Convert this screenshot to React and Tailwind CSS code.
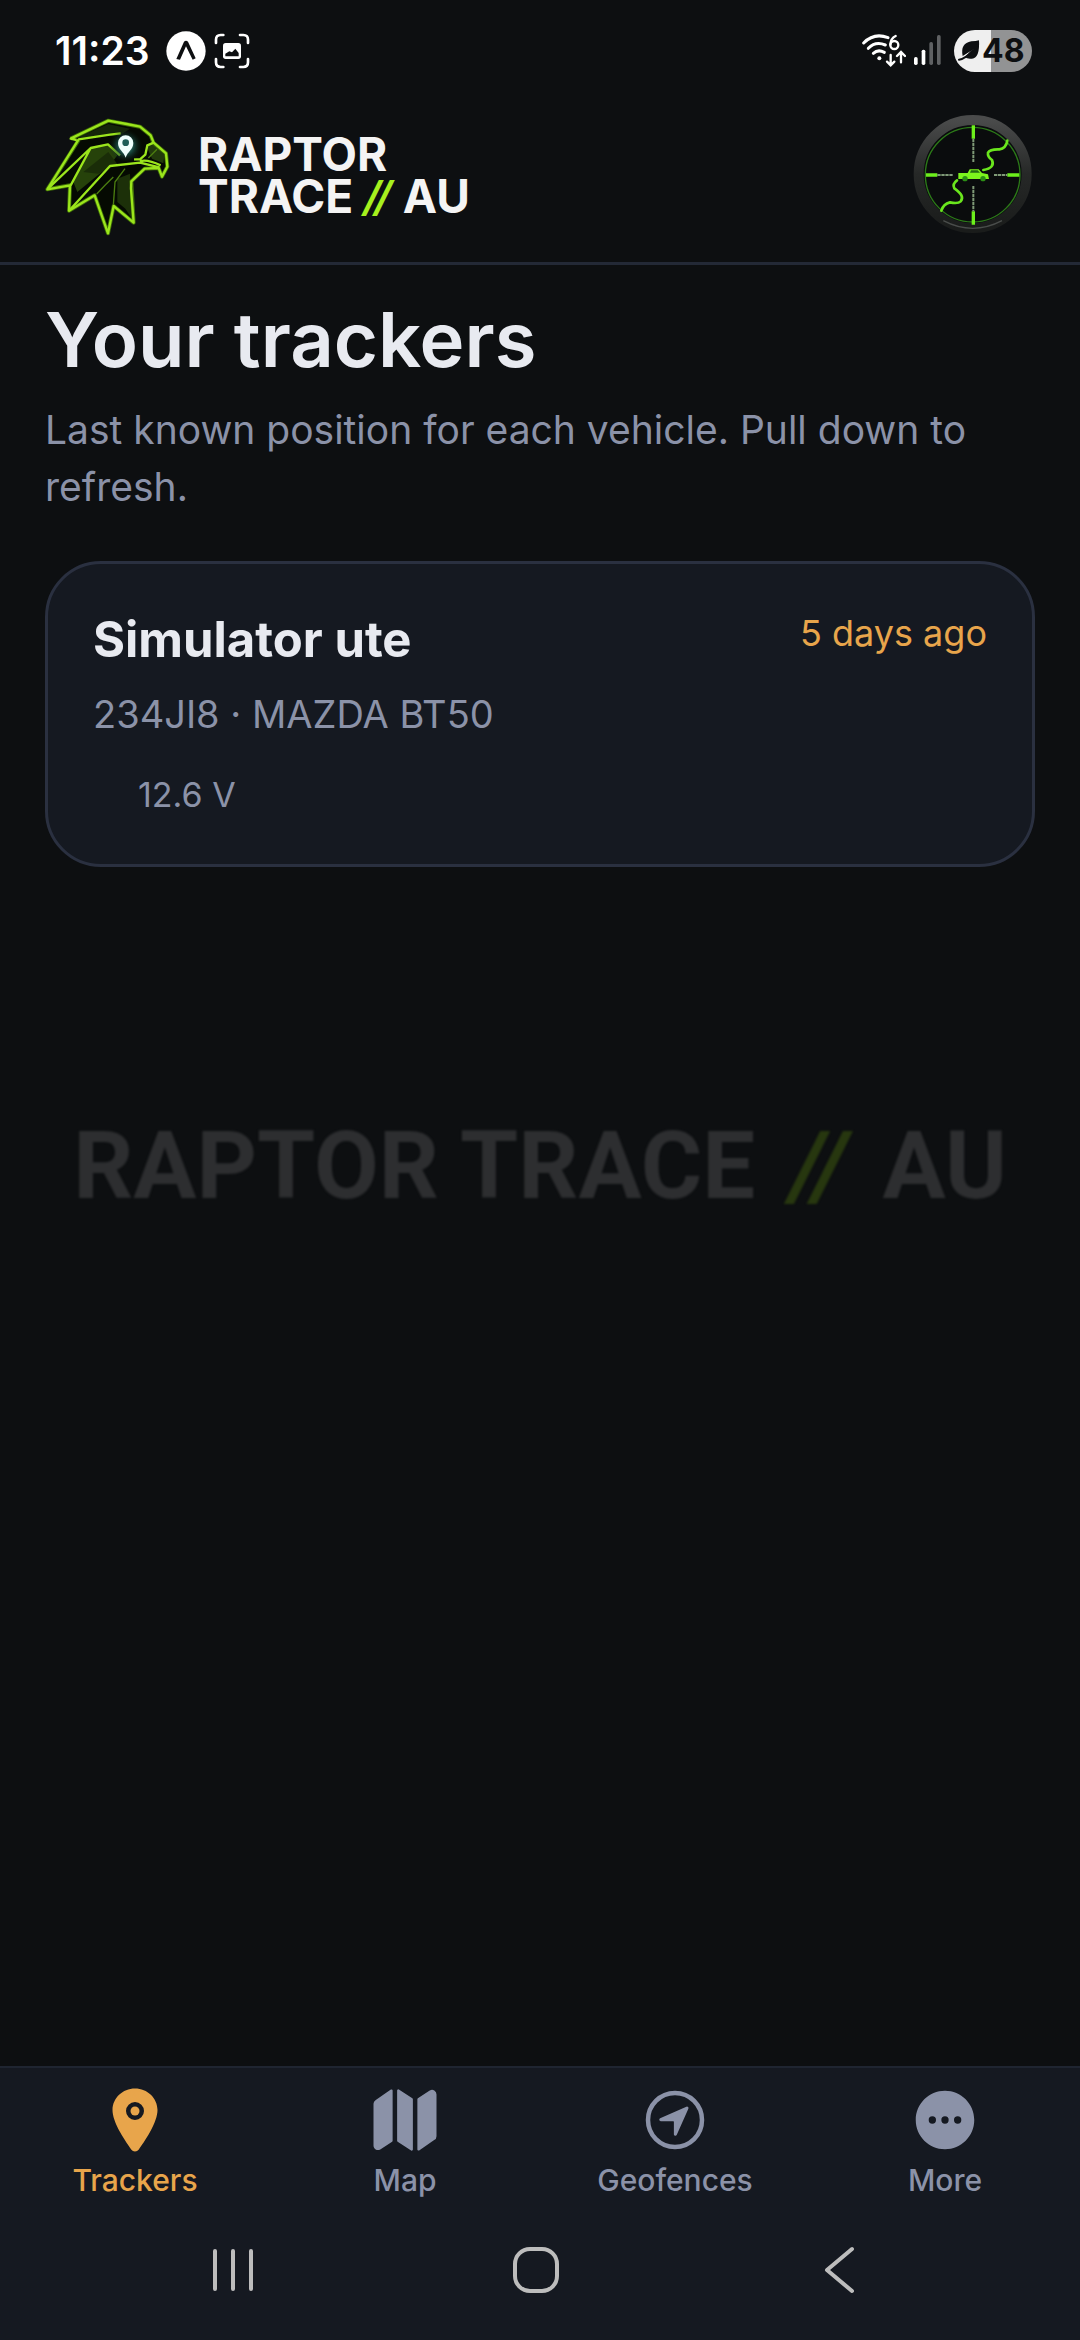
import React, { useState } from 'react';
import { IoLocation, IoMap, IoNavigateCircleOutline } from 'react-icons/io5';

const MoreIcon = ({ className }) => (
  <svg className={className} viewBox="0 0 512 512" fill="currentColor">
    <path
      fillRule="evenodd"
      d="M256 48C141 48 48 141 48 256s93 208 208 208 208-93 208-208S371 48 256 48Zm-90 234a26 26 0 1 1 0-52 26 26 0 0 1 0 52Zm90 0a26 26 0 1 1 0-52 26 26 0 0 1 0 52Zm90 0a26 26 0 1 1 0-52 26 26 0 0 1 0 52Z"
    />
  </svg>
);

const trackers = [
  { id: 1, name: 'Simulator ute', plate: '234JI8', model: 'MAZDA BT50', voltage: '12.6 V', lastSeen: '5 days ago' },
];

const tabs = [
  { id: 'trackers', label: 'Trackers', Icon: IoLocation },
  { id: 'map', label: 'Map', Icon: IoMap },
  { id: 'geofences', label: 'Geofences', Icon: IoNavigateCircleOutline },
  { id: 'more', label: 'More', Icon: MoreIcon },
];

const StatusBar = () => (
  <div className="flex h-[102px] items-center justify-between pr-12 pl-[55px] text-white">
    <div className="flex items-center">
      <span className="text-[39px] leading-[48px] font-semibold">11:23</span>
      <svg className="ml-4 h-10 w-10" viewBox="0 0 120 120">
        <circle cx="60" cy="60" r="59" fill="#fff" />
        <path d="M31 84 L54 32 Q60 27 66 32 L89 82 L80 86 L60 46 L42 86 Z" fill="#0d0f11" />
      </svg>
      <svg className="ml-2 h-9 w-9" viewBox="0 0 108 108" fill="none" stroke="#fff" strokeWidth="8" strokeLinecap="round">
        <path d="M6 30 V20 Q6 6 20 6 H28 M78 6 H88 Q102 6 102 20 V30 M102 78 V88 Q102 102 88 102 H78 M28 102 H20 Q6 102 6 88 V78" />
        <rect x="27" y="30" width="54" height="48" rx="8" fill="#fff" stroke="none" />
        <path d="M34 70 V62 L46 55 L54 58 L64 47 L74 60 V70 Z" fill="#0d0f11" stroke="none" />
      </svg>
    </div>
    <div className="flex items-center">
      <svg className="h-9 w-11" viewBox="0 0 132 108" fill="none" stroke="#fff" strokeWidth="9" strokeLinecap="round">
        <path d="M5 30 Q36 -2 78 14" />
        <path d="M19 46 Q40 24 70 36" />
        <path d="M34 61 Q48 48 67 58" />
        <circle cx="52" cy="76" r="6" fill="#fff" stroke="none" />
        <path d="M101 9 Q86 16 85 35" strokeWidth="7" />
        <circle cx="97" cy="36" r="12" strokeWidth="7" />
        <path d="M86 66 V96 M75 86 L86 97 L97 86" strokeWidth="7" />
        <path d="M117 88 V60 M105 69 L117 57 L129 69" strokeWidth="7" />
      </svg>
      <svg className="ml-2 h-8 w-7" viewBox="0 0 84 96">
        <rect x="0" y="66" width="11" height="24" rx="5" fill="#fff" />
        <rect x="23" y="44" width="11" height="46" rx="5" fill="#fff" />
        <rect x="46" y="21" width="11" height="69" rx="5" fill="#5f6163" />
        <rect x="69" y="0" width="11" height="90" rx="5" fill="#5f6163" />
      </svg>
      <div className="ml-3 flex h-[42px] w-[78px] items-center overflow-hidden rounded-full bg-linear-to-r from-[#efefef] from-48% to-[#929394] to-48% pl-1 text-[#0d0f11]">
        <svg className="h-8 w-6 shrink-0" viewBox="0 0 72 90">
          <path d="M63 13 Q66 66 42 68 Q28 70 20 63 L47 40 L14 60 Q6 22 40 16 Q54 16 63 13 Z" fill="#0d0f11" />
          <path d="M3 71 Q20 70 44 43" fill="none" stroke="#0d0f11" strokeWidth="6" strokeLinecap="round" />
        </svg>
        <span className="text-[32px] leading-[40px] font-bold">48</span>
      </div>
    </div>
  </div>
);

const RaptorLogo = () => (
  <svg className="h-[122px] w-[125px]" viewBox="45 36 375 366" fill="none" strokeLinejoin="round">
    <defs>
      <radialGradient id="eyeGlow">
        <stop offset="0" stopColor="#7fe0d0" stopOpacity="0.9" />
        <stop offset="0.5" stopColor="#1d5a50" stopOpacity="0.7" />
        <stop offset="1" stopColor="#0a1a10" stopOpacity="0" />
      </radialGradient>
    </defs>
    <path d="M122 110 L235 56 L330 74 L364 100 L371 122 L408 154 L412 194 L396 224 L388 196 L340 202 L304 236 L311 362 L251 312 L234 394 L194 280 L117 326 L120 250 L52 262 L146 112 Z" fill="#050a02" />
    <path d="M182 138 L234 128 L262 160 L240 190 L142 270 L130 240 Z" fill="#26420a" />
    <path d="M160 210 L235 150 L262 186 L205 215 Z" fill="#1a2d08" />
    <path d="M140 108 L235 66 L300 80 L270 100 Z" fill="#15260a" />
    <path d="M262 230 L300 215 L306 350 L286 320 L262 300 Z" fill="#1c3009" />
    <path d="M348 128 L368 126 L404 156 L400 184 L366 170 Z" fill="#223a0c" />
    <path d="M285 200 L255 240 L250 310 M250 225 L225 250 L200 276 M355 168 L381 142" stroke="#4b7d10" strokeWidth="4" />
    <path d="M122 110 L235 56 L330 74 L362 100 L370 122 L408 154 L412 194 L396 224 L386 198 L344 200 L304 238 L311 362 L251 312 L234 394 L194 280 L117 326 L120 250 L52 262 L146 114" stroke="#3f6d08" strokeWidth="12" />
    <path d="M140 114 L122 110 L180 82 L235 56 L290 66 L330 74 L362 100 L371 122 L408 154 L412 194 L396 224 L386 198 L344 200 L304 238 L303 260 L311 362 L251 312 L234 394 L194 280 L117 326 L120 250 L52 262 L146 112 L240 98 L272 94" stroke="#9be51c" strokeWidth="7" />
    <path d="M54 260 L182 138 L234 127 L270 160 M182 138 L122 250 M117 326 L240 192 L330 182 L388 196 M330 178 Q350 170 392 190 M371 122 L352 130 L346 158 L330 172 L312 172" stroke="#9be51c" strokeWidth="7" />
    <circle cx="287" cy="132" r="50" fill="url(#eyeGlow)" />
    <path d="M287 167 C282 150 264 142 264 123 A23 23 0 0 1 310 123 C310 142 292 150 287 167 Z" fill="#eefffb" />
    <circle cx="287" cy="122" r="10" fill="#1c5f57" />
  </svg>
);

const ScopeBadge = () => (
  <svg className="h-[122px] w-[122px]" viewBox="39 42 366 366" fill="none">
    <defs>
      <linearGradient id="scopeRing" x1="0" y1="0" x2="0" y2="1">
        <stop offset="0" stopColor="#4a4b4b" />
        <stop offset="0.5" stopColor="#262827" />
        <stop offset="1" stopColor="#1a1c1b" />
      </linearGradient>
    </defs>
    <circle cx="218" cy="222" r="162" fill="#0a0c0d" stroke="url(#scopeRing)" strokeWidth="30" />
    <path d="M130 362 Q218 408 306 362" stroke="#4a4d4b" strokeWidth="4" />
    <circle cx="218" cy="224" r="142" stroke="#2c7a18" strokeWidth="4" />
    <path d="M220 76 V116 M220 334 V374 M78 225 H112 M322 225 H358" stroke="#6df01c" strokeWidth="10" />
    <path d="M220 116 V186 M220 258 V334 M112 225 H158 M282 225 H322" stroke="#7f9a77" strokeWidth="6" strokeDasharray="10 2" />
    <path d="M322 122 Q318 145 298 148 Q270 147 264 158 Q262 170 276 180 Q286 204 250 210" stroke="#6ae61d" strokeWidth="8" strokeLinecap="round" />
    <path d="M171 241 Q156 252 163 265 Q196 288 182 304 Q174 312 150 307 Q130 312 124 332" stroke="#6ae61d" strokeWidth="8" strokeLinecap="round" />
    <path d="M175 219 H203 L209 208 H236 L246 219 L264 223 L267 237 H175 Z" fill="#7cf51d" />
    <path d="M210 218 L213 211 H233 L240 218 Z" fill="#256b12" />
    <circle cx="195" cy="236" r="8" fill="#2c8f16" />
    <circle cx="249" cy="236" r="8" fill="#2c8f16" />
  </svg>
);

const TrackerCard = ({ tracker }) => (
  <article className="rounded-[56px] border-3 border-[#2a3040] bg-[#151921] p-[45px]">
    <div className="flex items-start justify-between">
      <h2 className="text-[49px] leading-[62px] font-bold text-[#e8eaf0]">{tracker.name}</h2>
      <span className="text-[36px] leading-[48px] text-[#e8a54b]">{tracker.lastSeen}</span>
    </div>
    <p className="mt-[18px] text-[38px] leading-[50px] text-[#8b92a8]">{tracker.plate} · {tracker.model}</p>
    <p className="mt-8 pl-[45px] text-[34px] leading-[48px] text-[#8b92a8]">{tracker.voltage}</p>
  </article>
);

const App = () => {
  const [activeTab, setActiveTab] = useState('trackers');

  return (
    <div className="relative flex min-h-screen flex-col bg-[#0d0f11] font-['Inter',sans-serif]">
      <StatusBar />

      <header className="flex items-center justify-between border-b-3 border-[#232936] px-[45px] pt-3 pb-[26px]">
        <div className="flex items-center gap-7">
          <RaptorLogo />
          <p className="text-[46px] leading-[42px] font-bold whitespace-nowrap text-[#f4f4f4]">
            RAPTOR
            <br />
            TRACE <span className="font-['Roboto',sans-serif] text-[#a6f01e] italic">//</span> AU
          </p>
        </div>
        <button type="button" aria-label="Account"><ScopeBadge /></button>
      </header>

      {/* Watermark behind the list */}
      <div className="pointer-events-none absolute inset-0 flex items-center justify-center pb-2">
        <span className="font-['Roboto',sans-serif] text-[94px] leading-[110px] font-bold whitespace-nowrap text-[#2d2e30] blur-[1px]">
          RAPTOR TRACE <span className="px-3 text-[#27370f] italic">//</span> AU
        </span>
      </div>

      <main className="flex-1 px-[45px] pt-8">
        <h1 className="text-[76px] leading-[84px] font-semibold text-[#e8eaf0]">Your trackers</h1>
        <p className="mt-5 text-[39px] leading-[57px] text-[#8b92a8]">
          Last known position for each vehicle. Pull down to refresh.
        </p>
        <div className="mt-[46px] flex flex-col gap-8">
          {trackers.map(t => <TrackerCard key={t.id} tracker={t} />)}
        </div>
      </main>

      <footer className="border-t-2 border-[#1f2531] bg-[#151921]">
        <nav className="grid grid-cols-4 pt-4">
          {tabs.map(({ id, label, Icon }) => (
            <button
              key={id}
              type="button"
              onClick={() => setActiveTab(id)}
              className={`flex flex-col items-center gap-1 ${activeTab === id ? 'text-[#e8a54b]' : 'text-[#8b92a8]'}`}
            >
              <Icon className="h-[72px] w-[72px]" />
              <span className="text-[30px] leading-[40px] font-medium">{label}</span>
            </button>
          ))}
        </nav>
        <div className="grid h-[140px] grid-cols-3 place-items-center pr-[88px] pl-20 text-[#bdbdbd]">
          <button type="button" aria-label="Recent apps">
            <svg className="h-12 w-12" viewBox="0 0 48 48" stroke="currentColor" strokeWidth="4" strokeLinecap="round">
              <path d="M7 5 V43 M25 5 V43 M43 5 V43" />
            </svg>
          </button>
          <button type="button" aria-label="Home">
            <svg className="h-12 w-12" viewBox="0 0 48 48" fill="none" stroke="currentColor" strokeWidth="4">
              <rect x="3" y="3" width="42" height="42" rx="15" />
            </svg>
          </button>
          <button type="button" aria-label="Back">
            <svg className="h-12 w-12" viewBox="0 0 48 48" fill="none" stroke="currentColor" strokeWidth="4" strokeLinecap="round" strokeLinejoin="round">
              <path d="M36 3 L11 24 L36 45" />
            </svg>
          </button>
        </div>
      </footer>
    </div>
  );
};

export default App;
